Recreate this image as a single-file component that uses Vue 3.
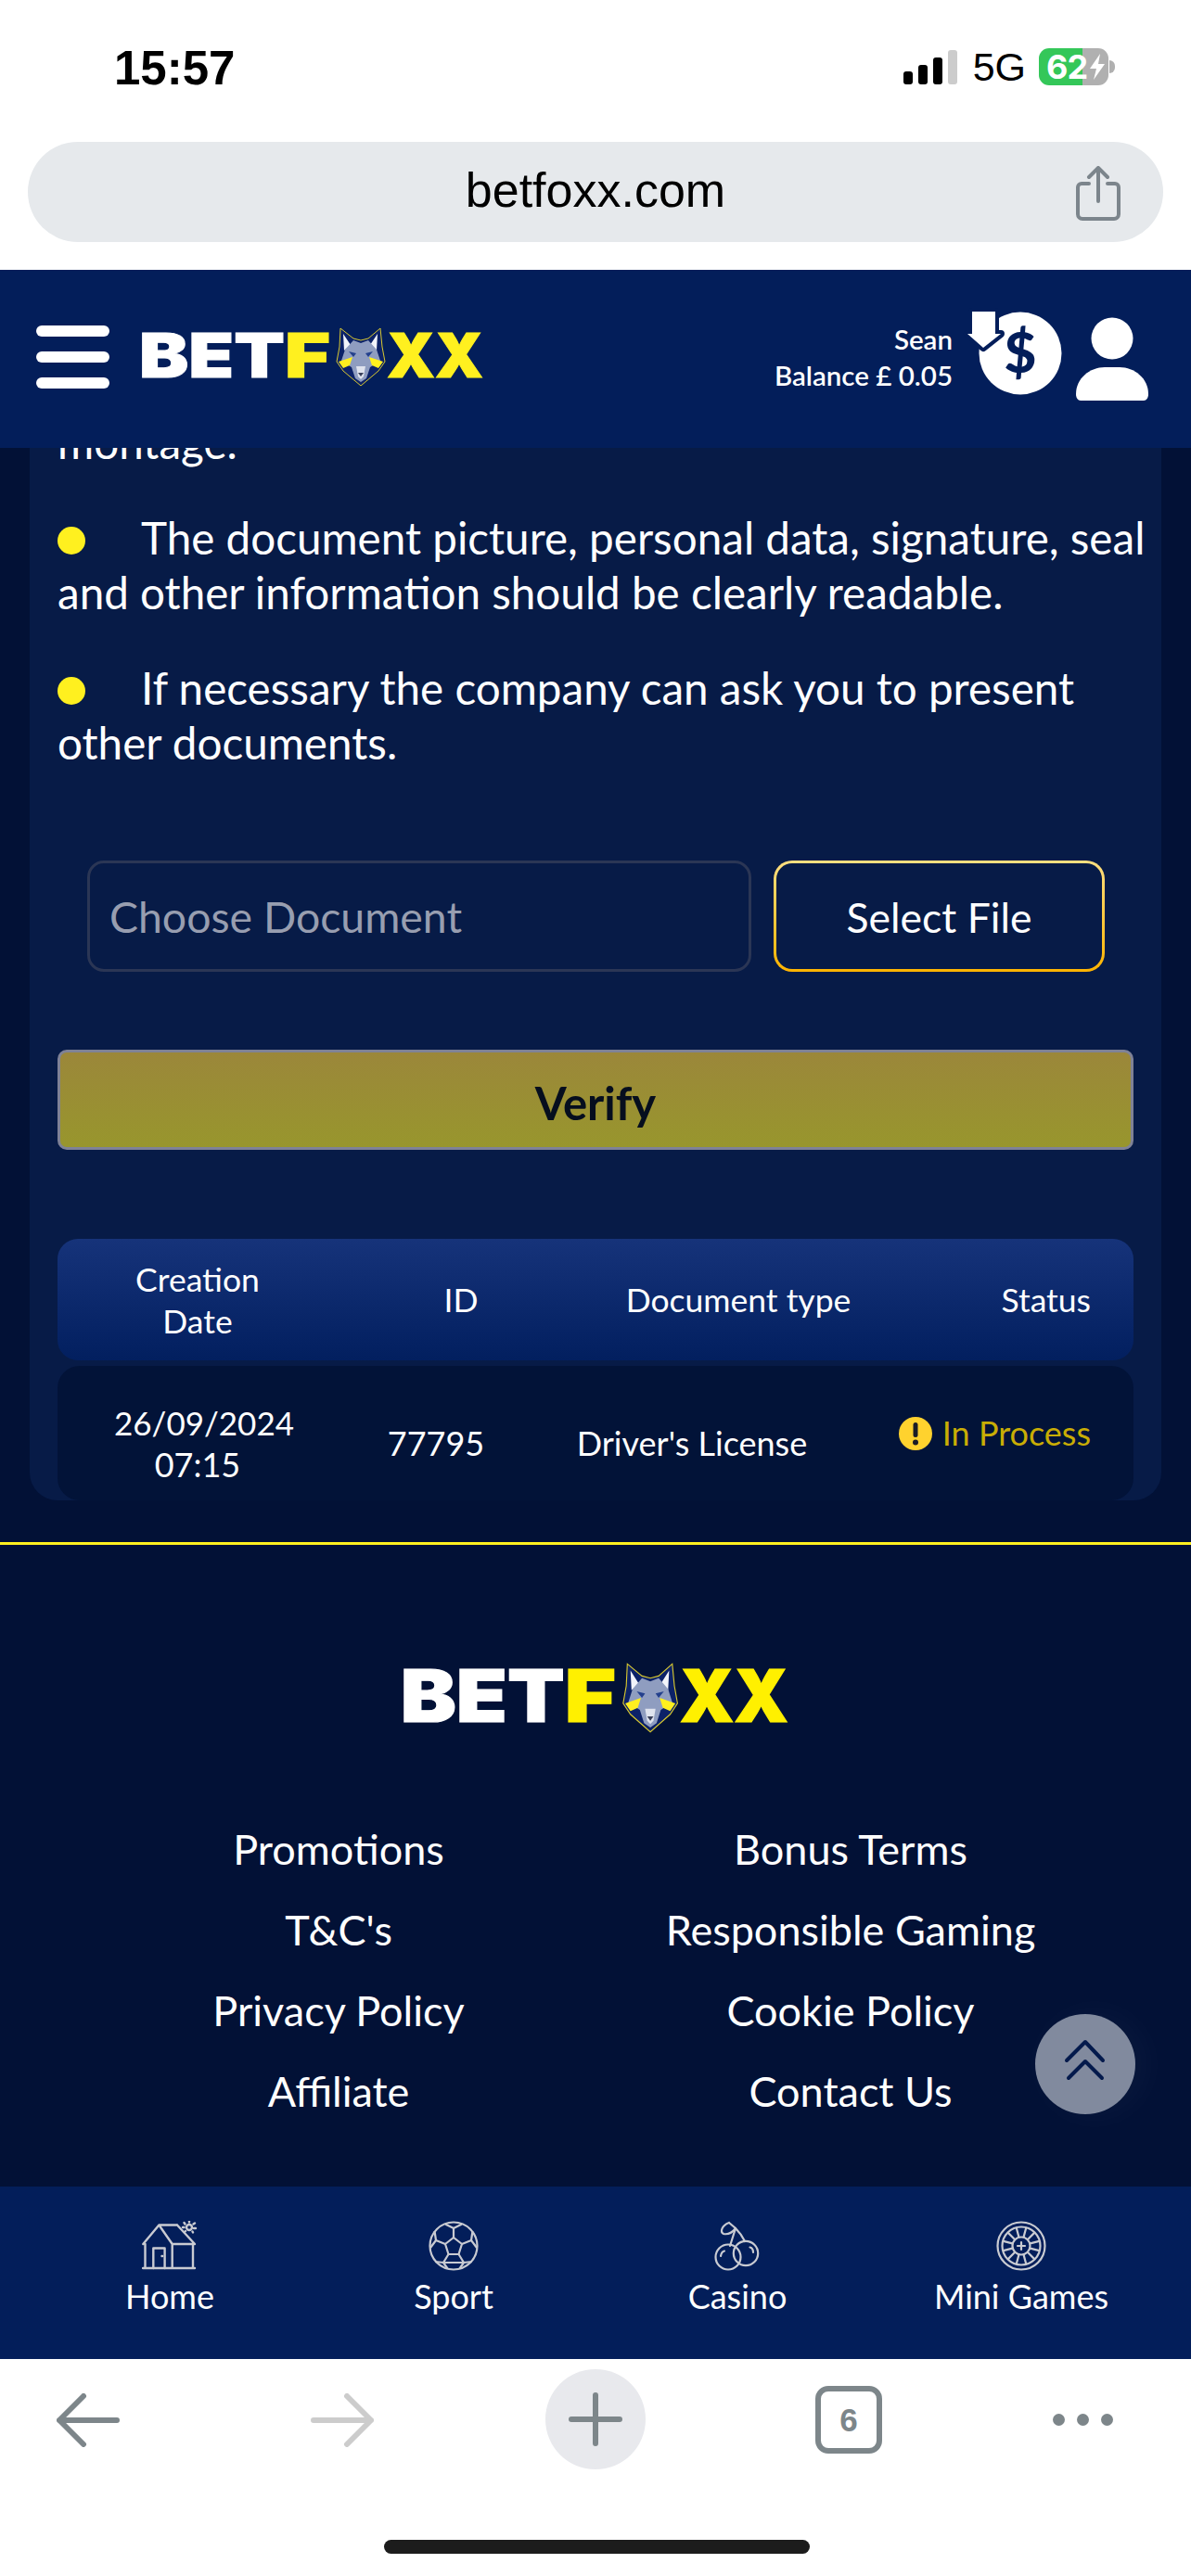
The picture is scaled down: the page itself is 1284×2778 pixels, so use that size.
<script setup>
// rows of the page, kept as data so the template stays short
const notes = [
  'The document picture, personal data, signature, seal and other information should be clearly readable.',
  'If necessary the company can ask you to present other documents.'
]
const footerLinks = [
  'Promotions', 'Bonus Terms',
  "T&C's", 'Responsible Gaming',
  'Privacy Policy', 'Cookie Policy',
  'Affiliate', 'Contact Us'
]
// spokes of the roulette wheel
const spokes = Array.from({ length: 12 }, (_, i) => {
  const a = (i * Math.PI) / 6 + Math.PI / 12
  return {
    x1: 27 + 10 * Math.cos(a),
    y1: 27 + 10 * Math.sin(a),
    x2: 27 + 20 * Math.cos(a),
    y2: 27 + 20 * Math.sin(a)
  }
})
</script>

<template>
  <div class="phone">
    <!-- fox head shared by both logos -->
    <svg class="defs" width="0" height="0">
      <symbol id="fox" viewBox="0 0 370 66" preserveAspectRatio="none">
        <path d="M215 2 L229 13 L237 15 L245 13 L258 2 L260 22 L263 38 L256 48 L237 64 L218 48 L211 38 L214 22 Z" fill="#0c2268" stroke="#d8c92f" stroke-width="1" />
        <path d="M218 8 L226 20 L219 26 Z M255 8 L247 20 L254 26 Z" fill="#f2f4fa" />
        <path d="M220 25 L229 15 L237 18 L245 15 L254 25 L258 37 L247 44 L243 56 L237 60 L231 56 L227 44 L216 37 Z" fill="#8f9dc0" />
        <path d="M213 38 L228 33 L225 42 L218 45 Z M261 38 L246 33 L249 42 L256 45 Z" fill="#fff01f" />
        <path d="M224 27 L232 29 L229 33 Z M250 27 L242 29 L245 33 Z" fill="#24408c" />
        <path d="M232 43 L242 43 L240 54 L237 57 L234 54 Z" fill="#dfe3ee" />
        <path d="M234 50 L240 50 L237 54 Z" fill="#39405a" />
      </symbol>
    </svg>

    <div class="status">
      <span class="time">15:57</span>
      <div class="status-right">
        <div class="signal">
          <i class="b1"></i><i class="b2"></i><i class="b3"></i><i class="b4"></i>
        </div>
        <span class="net">5G</span>
        <div class="battery">
          <span class="bat-num">62</span>
          <svg class="bolt" width="20" height="30" viewBox="0 0 20 30">
            <path d="M13 1 L2 17 H9 L6 29 L18 12 H11 Z" fill="#fff" />
          </svg>
        </div>
        <span class="nub"></span>
      </div>
    </div>

    <div class="urlbar">
      <span class="url">betfoxx.com</span>
      <svg class="share" width="50" height="60" viewBox="0 0 50 60" fill="none" stroke="#7c858c" stroke-width="4" stroke-linecap="round" stroke-linejoin="round">
        <path d="M15 19 H7 A4 4 0 0 0 3 23 V52 A5 5 0 0 0 8 57 H42 A5 5 0 0 0 47 52 V23 A4 4 0 0 0 43 19 H35" />
        <path d="M25 38 V3 M15 12 L25 2 L35 12" />
      </svg>
    </div>

    <header class="site-head">
      <div class="burger"><i></i><i></i><i></i></div>
      <svg class="logo" viewBox="0 0 370 66" preserveAspectRatio="none">
        <text x="-2" y="55" class="logo-text" fill="#fff" stroke="#fff" textLength="157" lengthAdjust="spacingAndGlyphs">BET</text>
        <text x="155" y="55" class="logo-text" fill="currentColor" stroke="currentColor" textLength="49" lengthAdjust="spacingAndGlyphs">F</text>
        <text x="265" y="55" class="logo-text" fill="currentColor" stroke="currentColor" textLength="104" lengthAdjust="spacingAndGlyphs">XX</text>
        <use href="#fox" width="370" height="66" />
      </svg>
      <div class="account">
        <span>Sean</span>
        <span>Balance £ 0.05</span>
      </div>
      <svg class="coin" width="104" height="96" viewBox="0 0 104 96">
        <circle cx="57" cy="45" r="44.5" fill="#fff" />
        <path d="M5 0 H30 V24 H36 L17 39 L0 24 H5 Z" fill="#fff" stroke="#031e5a" stroke-width="8" stroke-linejoin="round" paint-order="stroke" />
        <text x="57" y="66" class="dollar" text-anchor="middle">$</text>
      </svg>
      <svg class="user" width="80" height="90" viewBox="0 0 80 90">
        <circle cx="40" cy="23" r="22.5" fill="#fff" />
        <path d="M1 83 C1 66 16 54 32 54 H48 C64 54 79 66 79 83 C79 87 77 90 74 90 H6 C3 90 1 87 1 83 Z" fill="#fff" />
      </svg>
    </header>

    <div class="scroll">
      <main class="card">
        <p class="line-cut">montage.</p>
        <p v-for="n in notes" :key="n" class="note"><i class="dot"></i>{{ n }}</p>

        <div class="file-row">
          <input class="doc-input" placeholder="Choose Document" readonly />
          <button class="select-btn">Select File</button>
        </div>

        <button class="verify">Verify</button>

        <div class="t-head">
          <span class="center">Creation<br />Date</span>
          <span class="center">ID</span>
          <span class="center">Document type</span>
          <span class="right">Status</span>
        </div>
        <div class="t-row">
          <span class="center"><span class="date-top">26/09/2024</span><br />07:15</span>
          <span class="center">77795</span>
          <span class="center">Driver's License</span>
          <span class="state">
            <svg width="36" height="36" viewBox="0 0 36 36">
              <circle cx="18" cy="18" r="18" fill="#ffd22e" />
              <rect x="15.5" y="6" width="5" height="16" rx="2.5" fill="#1a1c26" />
              <circle cx="18" cy="27.5" r="3" fill="#1a1c26" />
            </svg>
            In Process
          </span>
        </div>
      </main>

      <footer class="site-foot">
        <div class="yellow-line"></div>
        <svg class="foot-logo" viewBox="0 0 370 66" preserveAspectRatio="none">
          <text x="-2" y="55" class="logo-text" fill="#fff" stroke="#fff" textLength="157" lengthAdjust="spacingAndGlyphs">BET</text>
          <text x="155" y="55" class="logo-text" fill="currentColor" stroke="currentColor" textLength="49" lengthAdjust="spacingAndGlyphs">F</text>
          <text x="265" y="55" class="logo-text" fill="currentColor" stroke="currentColor" textLength="104" lengthAdjust="spacingAndGlyphs">XX</text>
          <use href="#fox" width="370" height="66" />
        </svg>
        <div class="links">
          <a v-for="l in footerLinks" :key="l">{{ l }}</a>
        </div>
      </footer>

      <button class="to-top">
        <svg width="60" height="60" viewBox="0 0 60 60" fill="none" stroke="#041a4c" stroke-width="4" stroke-linecap="round" stroke-linejoin="round">
          <path d="M10 26 L30 6 L49 26 M12 45 L30 27 L48 45" />
        </svg>
      </button>
    </div>

    <nav class="bottom-nav">
      <div class="nav-item">
        <svg width="60" height="54" viewBox="0 0 60 54" fill="none" stroke="#c9cbd2" stroke-width="2.4" stroke-linecap="round" stroke-linejoin="round">
          <path d="M1 51 H57 M3.5 25 V51 M55 25 V51 M32.7 25 V51 M1.3 25 L18.4 4.5 H38 M18.4 4.5 L32.7 25 H57 L38 4.5" />
          <path d="M12.3 51 V29.5 H24.6 V51" />
          <path d="M21.5 38 h.6" />
          <circle cx="51" cy="7" r="3" />
          <path d="M51 0 V1.5 M45.5 2 L46.5 3.5 M57 2.5 L55.5 3.5 M58 8 H56 M44 7 H45.5 M46 12 L47 11 M55 12.5 L54.5 11.5" />
        </svg>
        <span>Home</span>
      </div>
      <div class="nav-item">
        <svg width="54" height="54" viewBox="0 0 54 54" fill="none" stroke="#c9cbd2" stroke-width="2.2" stroke-linejoin="round">
          <circle cx="27" cy="27" r="25.5" />
          <path d="M27 18 L36 25 L32.5 36 H21.5 L18 25 Z" />
          <path d="M27 18 V8 M18 3.5 L27 8 L36 3.5 M36 25 L46 21 M46 21 L47.5 11 M46 21 L52 29 M18 25 L8 21 M8 21 L6.5 11 M8 21 L2 29 M32.5 36 L38 45 M21.5 36 L16 45 M16 45 H38 M16 45 L20.5 51.5 M38 45 L33.5 51.5 M16 45 L7 44 M38 45 L47 44" />
        </svg>
        <span>Sport</span>
      </div>
      <div class="nav-item">
        <svg width="50" height="54" viewBox="0 0 50 54" fill="none" stroke="#c9cbd2" stroke-width="2.2" stroke-linecap="round" stroke-linejoin="round">
          <circle cx="15" cy="39" r="13.5" />
          <circle cx="34" cy="35" r="13.2" />
          <path d="M23 8 L17 27 M23 8 C27 12 31 18 33 22" />
          <path d="M16 2 C8 5 6 12 10 14 C15 15 20 12 23 8 L16 2" />
          <path d="M7 38 C7.5 35 9 33 11 32.5 M42 34 C42 31 40.5 29 38.5 28.5" />
        </svg>
        <span>Casino</span>
      </div>
      <div class="nav-item">
        <svg width="54" height="54" viewBox="0 0 54 54" fill="none" stroke="#c9cbd2" stroke-width="2.2" stroke-linecap="round">
          <circle cx="27" cy="27" r="25.5" />
          <circle cx="27" cy="27" r="20.5" />
          <circle cx="27" cy="27" r="9.5" />
          <line v-for="(s, i) in spokes" :key="i" :x1="s.x1" :y1="s.y1" :x2="s.x2" :y2="s.y2" />
          <path d="M27 23 V31 M23 27 H31" />
        </svg>
        <span>Mini Games</span>
      </div>
    </nav>

    <div class="toolbar">
      <svg width="68" height="58" viewBox="0 0 68 58" fill="none" stroke="#7d868a" stroke-width="6" stroke-linecap="round" stroke-linejoin="round">
        <path d="M29 3 L3 29 L29 55 M3 29 H65" />
      </svg>
      <svg width="68" height="58" viewBox="0 0 68 58" fill="none" stroke="#cccccc" stroke-width="6" stroke-linecap="round" stroke-linejoin="round">
        <path d="M39 3 L65 29 L39 55 M65 29 H3" />
      </svg>
      <div class="plus">
        <svg width="58" height="58" viewBox="0 0 58 58" fill="none" stroke="#7d868a" stroke-width="6" stroke-linecap="round">
          <path d="M29 3 V55 M3 29 H55" />
        </svg>
      </div>
      <div class="tabs">6</div>
      <div class="more"><i></i><i></i><i></i></div>
    </div>
    <div class="home-bar"></div>
  </div>
</template>

<style>
html, body { margin: 0; background: #fff; }
</style>

<style scoped>
.phone {
  position: relative;
  width: 1284px;
  height: 2778px;
  overflow: hidden;
  display: flex;
  flex-direction: column;
  background: #fff;
  font-family: Lato, "Liberation Sans", sans-serif;
  color: #fff;
}
.defs { position: absolute; }
.logo-text {
  font-family: Inter, "Liberation Sans", sans-serif;
  font-weight: 900;
  font-size: 66px;
  stroke-width: 1px;
}

/* status bar */
.status {
  height: 144px;
  flex: none;
  display: flex;
  align-items: center;
  justify-content: space-between;
  padding: 0 82px 0 123px;
  color: #000;
  font-family: "Liberation Sans", sans-serif;
  box-sizing: border-box;
}
.time { font-size: 51px; font-weight: 700; margin-top: 3px; }
.status-right { display: flex; align-items: center; }
.signal { display: flex; align-items: flex-end; gap: 6px; height: 37px; margin-right: 17px; }
.signal i { width: 10px; background: #000; border-radius: 3px; display: block; }
.signal .b1 { height: 14px; }
.signal .b2 { height: 21px; }
.signal .b3 { height: 29px; }
.signal .b4 { height: 37px; background: #ccc; }
.net { font-size: 43px; margin-right: 14px; line-height: 1; }
.battery {
  width: 75px;
  height: 40px;
  border-radius: 11px;
  background: linear-gradient(90deg, #34c759 47px, #b0b0b0 47px);
  display: flex;
  align-items: center;
  padding-left: 8px;
  box-sizing: border-box;
  color: #fff;
}
.bat-num { font-size: 36px; font-weight: 700; font-family: Inter, sans-serif; letter-spacing: -1px; line-height: 1; }
.bolt { margin-left: 1px; flex: none; }
.nub { width: 6px; height: 14px; background: #b0b0b0; border-radius: 0 7px 7px 0; margin-left: 1px; }

/* address bar */
.urlbar {
  position: relative;
  flex: none;
  height: 108px;
  margin: 9px 30px 30px;
  border-radius: 54px;
  background: #e6e9ec;
  display: flex;
  align-items: center;
  justify-content: center;
}
.url { color: #000; font-family: "Liberation Sans", sans-serif; font-size: 52px; margin-top: -4px; }
.share { position: absolute; right: 45px; top: 26px; }

/* site header */
.site-head {
  position: relative;
  z-index: 2;
  flex: none;
  height: 192px;
  background: #031e5a;
  display: flex;
  align-items: center;
  padding: 0 45px 0 39px;
  box-sizing: border-box;
}
.burger { display: flex; flex-direction: column; gap: 16px; width: 79px; margin-top: -4px; }
.burger i { display: block; height: 12px; background: #fff; border-radius: 6px; }
.logo { width: 370px; height: 66px; margin-left: 34px; color: #fff01f; margin-top: -4px; overflow: visible; }
.account {
  margin-left: auto;
  display: flex;
  flex-direction: column;
  align-items: flex-end;
  font-size: 29.5px;
  font-weight: 600;
  line-height: 39px;
  margin-top: -5px;
}
.coin { margin-left: 16px; margin-top: -6px; overflow: visible; flex: none; }
.dollar {
  font-family: Lato, sans-serif;
  font-weight: 900;
  font-size: 60px;
  fill: #031e5a;
}
.user { margin-left: 12px; margin-top: -1px; flex: none; }

/* scrolled area */
.scroll {
  position: relative;
  flex: 1;
  min-height: 0;
  overflow: hidden;
  background: #021136;
}
.card {
  margin: -36.5px 32px 0;
  padding: 0 12px 0 30px;
  background: #071b47;
  border-radius: 0 0 30px 30px;
  height: 1171.5px;
  box-sizing: border-box;
  overflow: hidden;
}
.line-cut, .note {
  margin: 0 0 44px;
  font-size: 47.6px;
  line-height: 59px;
}
.dot {
  display: inline-block;
  width: 30px;
  height: 30px;
  border-radius: 50%;
  background: #fff01f;
  margin-right: 60px;
}
.file-row {
  display: flex;
  gap: 24px;
  margin: 98.5px 0 0 32px;
}
.doc-input {
  width: 716px;
  height: 120px;
  box-sizing: border-box;
  border: 3px solid #2b3655;
  border-radius: 18px;
  background: #071b47;
  padding: 0 21px;
  font-family: Lato, sans-serif;
  font-size: 46.4px;
  color: #fff;
  outline: none;
}
.doc-input::placeholder { color: #989eb0; opacity: 1; }
.select-btn {
  width: 357px;
  height: 120px;
  box-sizing: border-box;
  border: 3px solid transparent;
  border-radius: 20px;
  background:
    linear-gradient(#071b47, #071b47) padding-box,
    linear-gradient(#ffdf80, #ffb400) border-box;
  font-family: Lato, sans-serif;
  font-size: 44.5px;
  color: #fff;
}
.verify {
  display: block;
  width: 1160px;
  height: 108px;
  margin-top: 84px;
  padding-top: 6px;
  box-sizing: border-box;
  border: 3px solid #7f8296;
  border-radius: 10px;
  background: linear-gradient(#9b873a, #98962d);
  font-family: Lato, sans-serif;
  font-size: 49px;
  font-weight: 700;
  color: #060e1e;
}
.t-head, .t-row {
  display: grid;
  width: 1160px;
  align-items: center;
  font-size: 36px;
  line-height: 45px;
}
.t-head {
  height: 131px;
  margin-top: 96px;
  grid-template-columns: 302px 266px 332px 1fr;
  padding-right: 46px;
  box-sizing: border-box;
  border-radius: 22px;
  font-size: 35.5px;
  background: linear-gradient(#16337a, #021f5f);
}
.t-row {
  height: 145px;
  margin-top: 6px;
  grid-template-columns: 302px 212px 340px 1fr;
  padding: 22px 46px 0 0;
  box-sizing: border-box;
  border-radius: 24px;
  background: #021338;
}
.center { text-align: center; }
.right { text-align: right; }
.date-top { padding-left: 14px; font-size: 35px; }
.state {
  display: flex;
  justify-content: flex-end;
  align-items: center;
  gap: 11px;
  color: #c9ad05;
  padding-bottom: 22px;
}

/* footer */
.site-foot { padding-top: 45px; display: flex; flex-direction: column; }
.yellow-line { height: 3px; background: #fff01f; }
.foot-logo {
  display: block;
  width: 417px;
  height: 78px;
  margin: 126px 0 0 434px;
  color: #fff000;
  overflow: visible;
}
.links {
  display: grid;
  grid-template-columns: 552px 552px;
  grid-auto-rows: 87px;
  padding-left: 89px;
  margin-top: 80px;
  font-size: 45px;
  align-items: center;
  text-align: center;
}
.to-top {
  position: absolute;
  left: 1116px;
  top: 1689px;
  width: 108px;
  height: 108px;
  border: none;
  border-radius: 50%;
  padding: 0;
  background: #818a9e;
  display: flex;
  align-items: center;
  justify-content: center;
  box-shadow: 10px 0 40px rgba(255, 255, 255, 0.04);
}

/* bottom nav */
.bottom-nav {
  flex: none;
  height: 186px;
  display: grid;
  grid-template-columns: repeat(4, 306px);
  padding: 37px 30px 0;
  box-sizing: border-box;
  background: #031e5a;
}
.nav-item {
  display: flex;
  flex-direction: column;
  align-items: center;
  font-size: 36px;
  line-height: 45px;
  gap: 5px;
}

/* browser toolbar */
.toolbar {
  flex: none;
  height: 234px;
  display: grid;
  grid-template-columns: 190px 358px 188px 358px 146px;
  justify-items: center;
  align-items: start;
  padding-top: 11px;
  box-sizing: border-box;
}
.toolbar > svg { margin-top: 26px; }
.plus {
  width: 108px;
  height: 108px;
  border-radius: 50%;
  background: #e8e9ed;
  display: flex;
  align-items: center;
  justify-content: center;
}
.tabs {
  width: 72px;
  height: 73px;
  margin-top: 18px;
  box-sizing: border-box;
  border: 6px solid #7d868a;
  border-radius: 14px;
  color: #7d868a;
  font-family: "Liberation Sans", sans-serif;
  font-weight: 700;
  font-size: 35px;
  display: flex;
  align-items: center;
  justify-content: center;
}
.more { display: flex; gap: 13px; margin-top: 48px; }
.more i { width: 13px; height: 13px; border-radius: 50%; background: #7d868a; display: block; }
.home-bar {
  position: absolute;
  left: 414px;
  top: 2739px;
  width: 459px;
  height: 15px;
  border-radius: 8px;
  background: #1c1c1c;
}
</style>
